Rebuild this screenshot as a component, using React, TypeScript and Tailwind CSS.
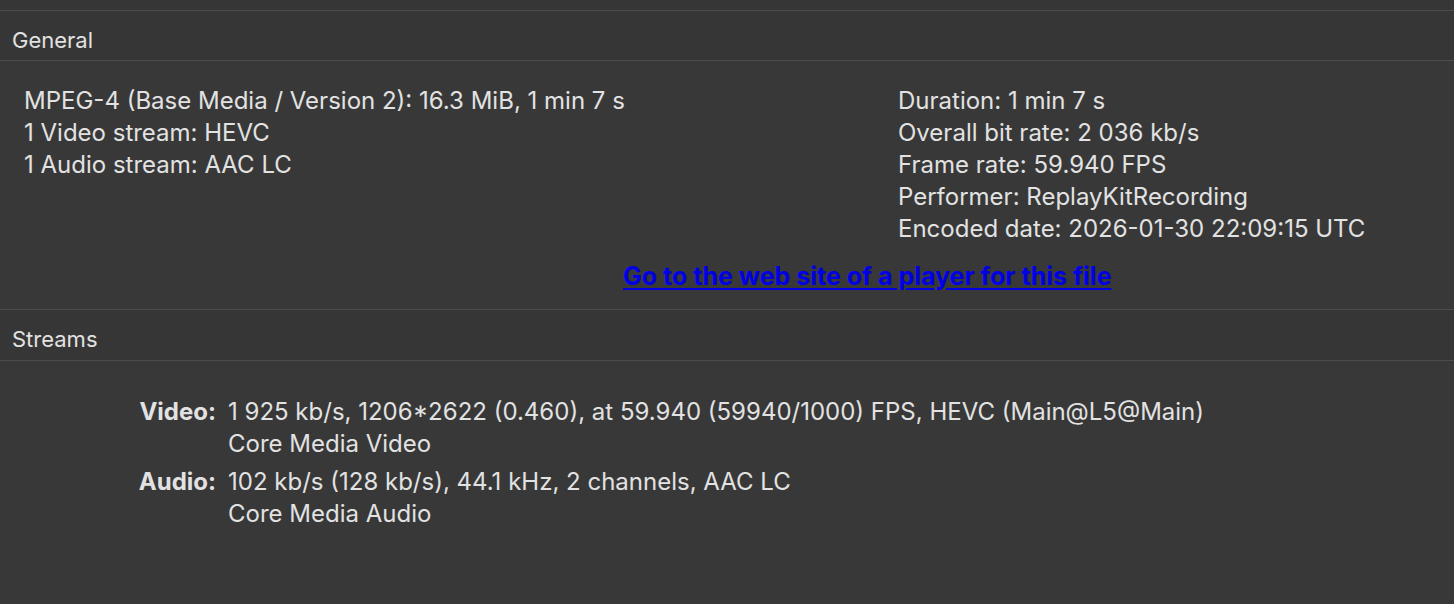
import React from "react";

const font = { fontFamily: "Inter, 'Noto Sans', sans-serif" };

export default function App() {
  return (
    <div
      className="w-[1454px] h-[604px] bg-[#383838] text-[#e2e2e2] overflow-hidden flex flex-col"
      style={font}
    >
      <div className="h-[11px] shrink-0 bg-[#363636] border-b border-[#4c4c4c]" />
      <div className="h-[50px] shrink-0 bg-[#363636] border-b border-[#4c4c4c] flex items-center pl-[12px] text-[22px] pt-[9px]">
        General
      </div>
      <div className="shrink-0 flex flex-col pt-[24px] pb-[17px] border-b border-[#4c4c4c]">
        <div className="flex text-[24px] leading-[32px]">
          <div className="w-[898px] pl-[24px] flex flex-col">
            <div>MPEG-4 (Base Media / Version 2): 16.3 MiB, 1 min 7 s</div>
            <div>1 Video stream: HEVC</div>
            <div>1 Audio stream: AAC LC</div>
          </div>
          <div className="flex flex-col">
            <div>Duration: 1 min 7 s</div>
            <div>Overall bit rate: 2 036 kb/s</div>
            <div>Frame rate: 59.940 FPS</div>
            <div>Performer: ReplayKitRecording</div>
            <div>Encoded date: 2026-01-30 22:09:15 UTC</div>
          </div>
        </div>
        <div className="mt-[15px] pl-[623px] text-[25px] leading-[32px]">
          <a href="#" className="text-[#0000e6] font-bold underline underline-offset-[3px]">
            Go to the web site of a player for this file
          </a>
        </div>
      </div>
      <div className="h-[51px] shrink-0 bg-[#363636] border-b border-[#4c4c4c] flex items-center pl-[12px] text-[22px] pt-[9px]">
        Streams
      </div>
      <div className="flex-1 pt-[35px] text-[24px] leading-[32px]">
        <div className="grid grid-cols-[216px_1fr] gap-x-[12px] gap-y-[6px]">
          <div className="text-right font-bold">Video:</div>
          <div className="flex flex-col">
            <div>1 925 kb/s, 1206*2622 (0.460), at 59.940 (59940/1000) FPS, HEVC (Main@L5@Main)</div>
            <div>Core Media Video</div>
          </div>
          <div className="text-right font-bold">Audio:</div>
          <div className="flex flex-col">
            <div>102 kb/s (128 kb/s), 44.1 kHz, 2 channels, AAC LC</div>
            <div>Core Media Audio</div>
          </div>
        </div>
      </div>
    </div>
  );
}
